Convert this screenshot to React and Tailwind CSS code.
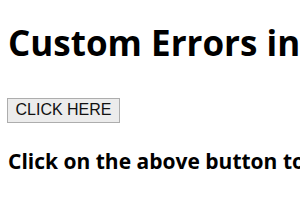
export default function App() {
  return (
    <div className="w-[300px] h-[210px] overflow-hidden bg-white text-black whitespace-nowrap" style={{ fontFamily: '"Open Sans", sans-serif' }}>
      <h1 className="pl-2 pt-[21px] text-[35px] leading-[44px] font-bold">Custom Errors in JavaScript</h1>
      <div className="pl-[7px] mt-[32px]">
        <button className="h-[25px] w-[113px] border border-[#adadad] bg-[#ececec] text-[16px] leading-none text-[#111]" style={{ fontFamily: '"Liberation Sans", sans-serif' }}>CLICK HERE</button>
      </div>
      <p className="pl-2 mt-[24px] text-[21px] leading-[28px] font-bold">Click on the above button to see the error</p>
    </div>
  );
}
